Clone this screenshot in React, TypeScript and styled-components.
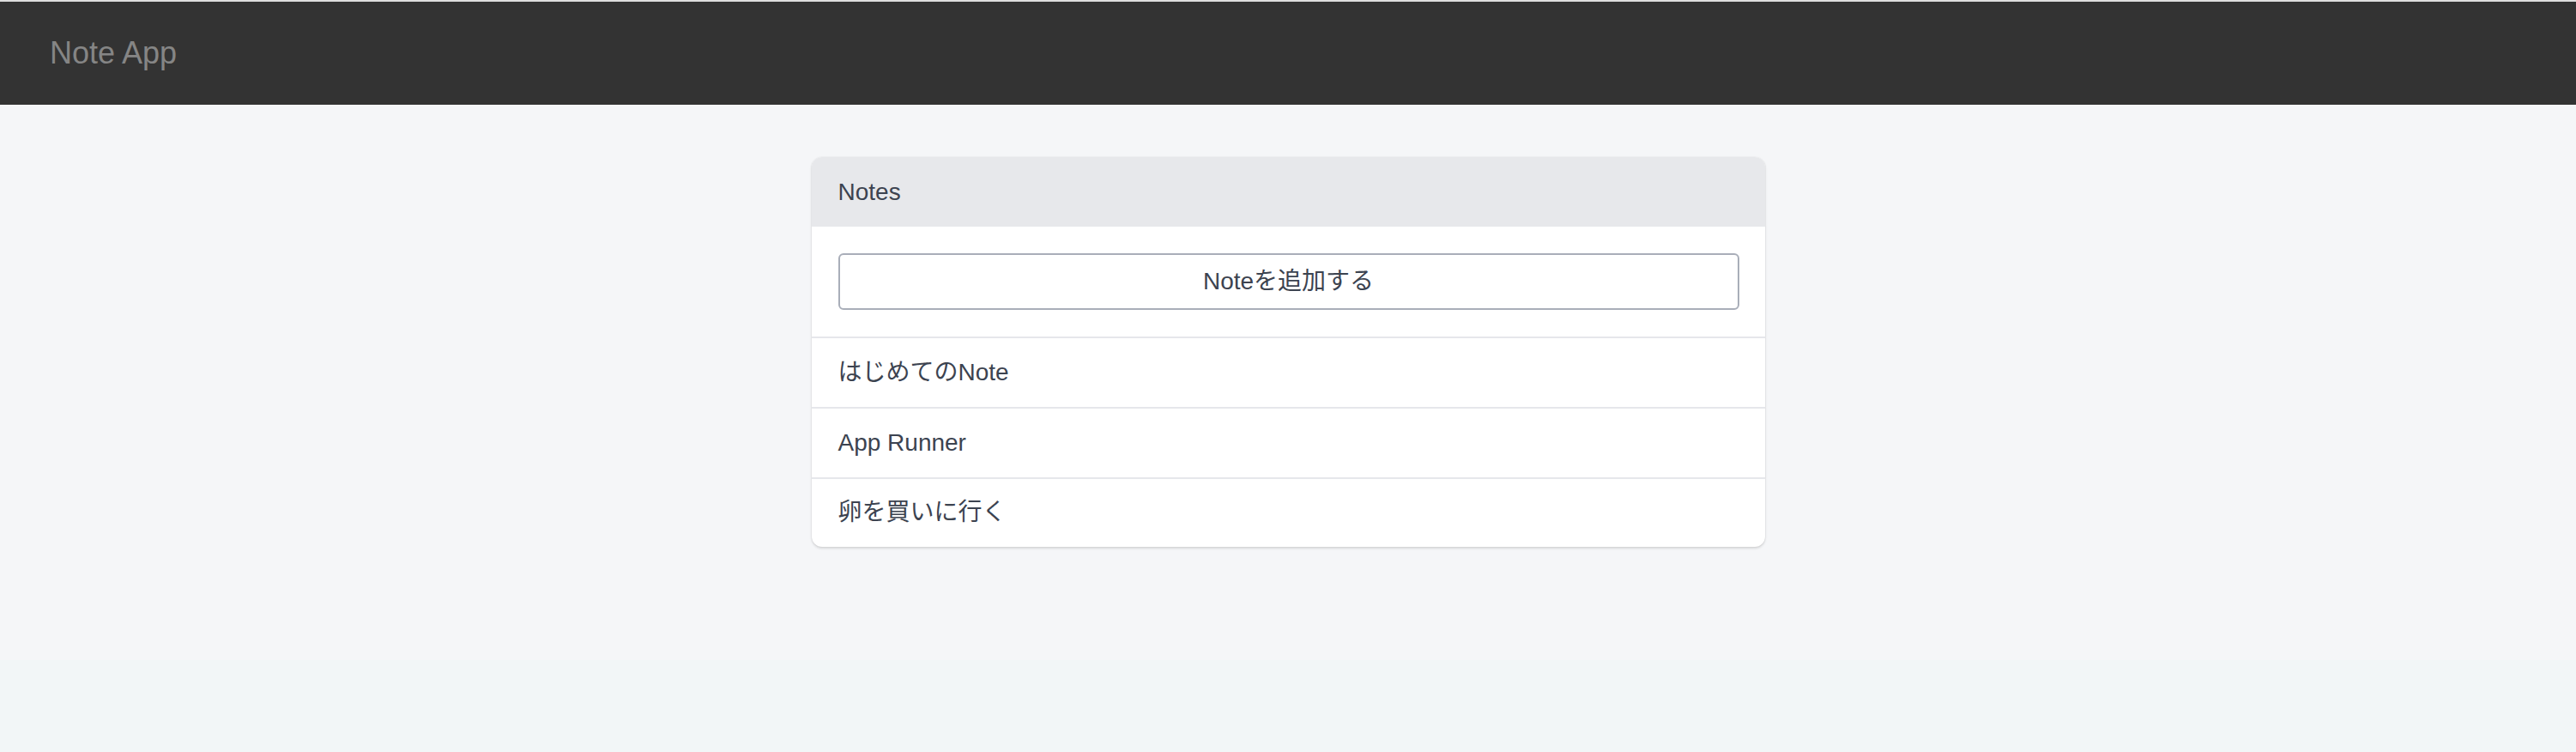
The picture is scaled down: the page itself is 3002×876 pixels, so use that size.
import React from 'react';
import styled, { createGlobalStyle } from 'styled-components';

const notes = ['はじめてのNote', 'App Runner', '卵を買いに行く'];

const App: React.FC = () => {
  return (
    <>
      <GlobalStyle />
      <Page>
        <Navbar>
          <Brand>Note App</Brand>
        </Navbar>
        <Main>
          <Card>
            <CardHeader>Notes</CardHeader>
            <ButtonArea>
              <AddButton type="button">Noteを追加する</AddButton>
            </ButtonArea>
            <NoteList>
              {notes.map(note => (
                <NoteItem key={note}>{note}</NoteItem>
              ))}
            </NoteList>
          </Card>
        </Main>
      </Page>
    </>
  );
};

export default App;

const GlobalStyle = createGlobalStyle`
  html, body {
    margin: 0;
    padding: 0;
    background-color: #f2f6f7;
  }
  body {
    font-family: 'Liberation Sans', 'Noto Sans CJK JP', Arial, sans-serif;
  }
  * {
    box-sizing: border-box;
  }
`;

const Page = styled.div`
  display: flex;
  flex-direction: column;
`;

const Navbar = styled.header`
  height: 122px;
  display: flex;
  align-items: center;
  padding: 0 58px;
  border-top: 2px solid #dedede;
  background-color: #333333;
`;

const Brand = styled.span`
  font-size: 36px;
  color: #858585;
  line-height: 1;
`;

const Main = styled.main`
  min-height: 647px;
  padding-top: 61px;
  background-color: #f5f6f8;
  display: flex;
  justify-content: center;
  align-items: flex-start;
`;

const Card = styled.section`
  width: 1111px;
  background-color: #ffffff;
  border-radius: 12px;
  overflow: hidden;
  box-shadow: 0 0 2px rgba(0, 0, 0, 0.1), 0 2px 3px rgba(0, 0, 0, 0.12);
`;

const CardHeader = styled.div`
  height: 81px;
  display: flex;
  align-items: center;
  padding: 0 31px;
  background-color: #e7e8eb;
  font-size: 28px;
  color: #3c4350;
`;

const ButtonArea = styled.div`
  padding: 31px 30px 31px 31px;
  border-bottom: 2px solid #e6e7eb;
`;

const AddButton = styled.button`
  width: 100%;
  height: 66px;
  background-color: #ffffff;
  border: 2px solid #a9aeb9;
  border-radius: 6px;
  font-family: 'Liberation Sans', 'Noto Sans CJK JP', Arial, sans-serif;
  font-size: 28px;
  line-height: 1;
  color: #3c4350;
  cursor: pointer;
`;

const NoteList = styled.ul`
  list-style: none;
  margin: 0;
  padding: 0;
`;

const NoteItem = styled.li`
  height: 82px;
  display: flex;
  align-items: center;
  padding: 0 31px 1px;
  font-size: 28px;
  line-height: 1;
  color: #3c4350;
  border-bottom: 2px solid #e6e7eb;
  &:last-child {
    height: 79px;
    border-bottom: none;
  }
`;
